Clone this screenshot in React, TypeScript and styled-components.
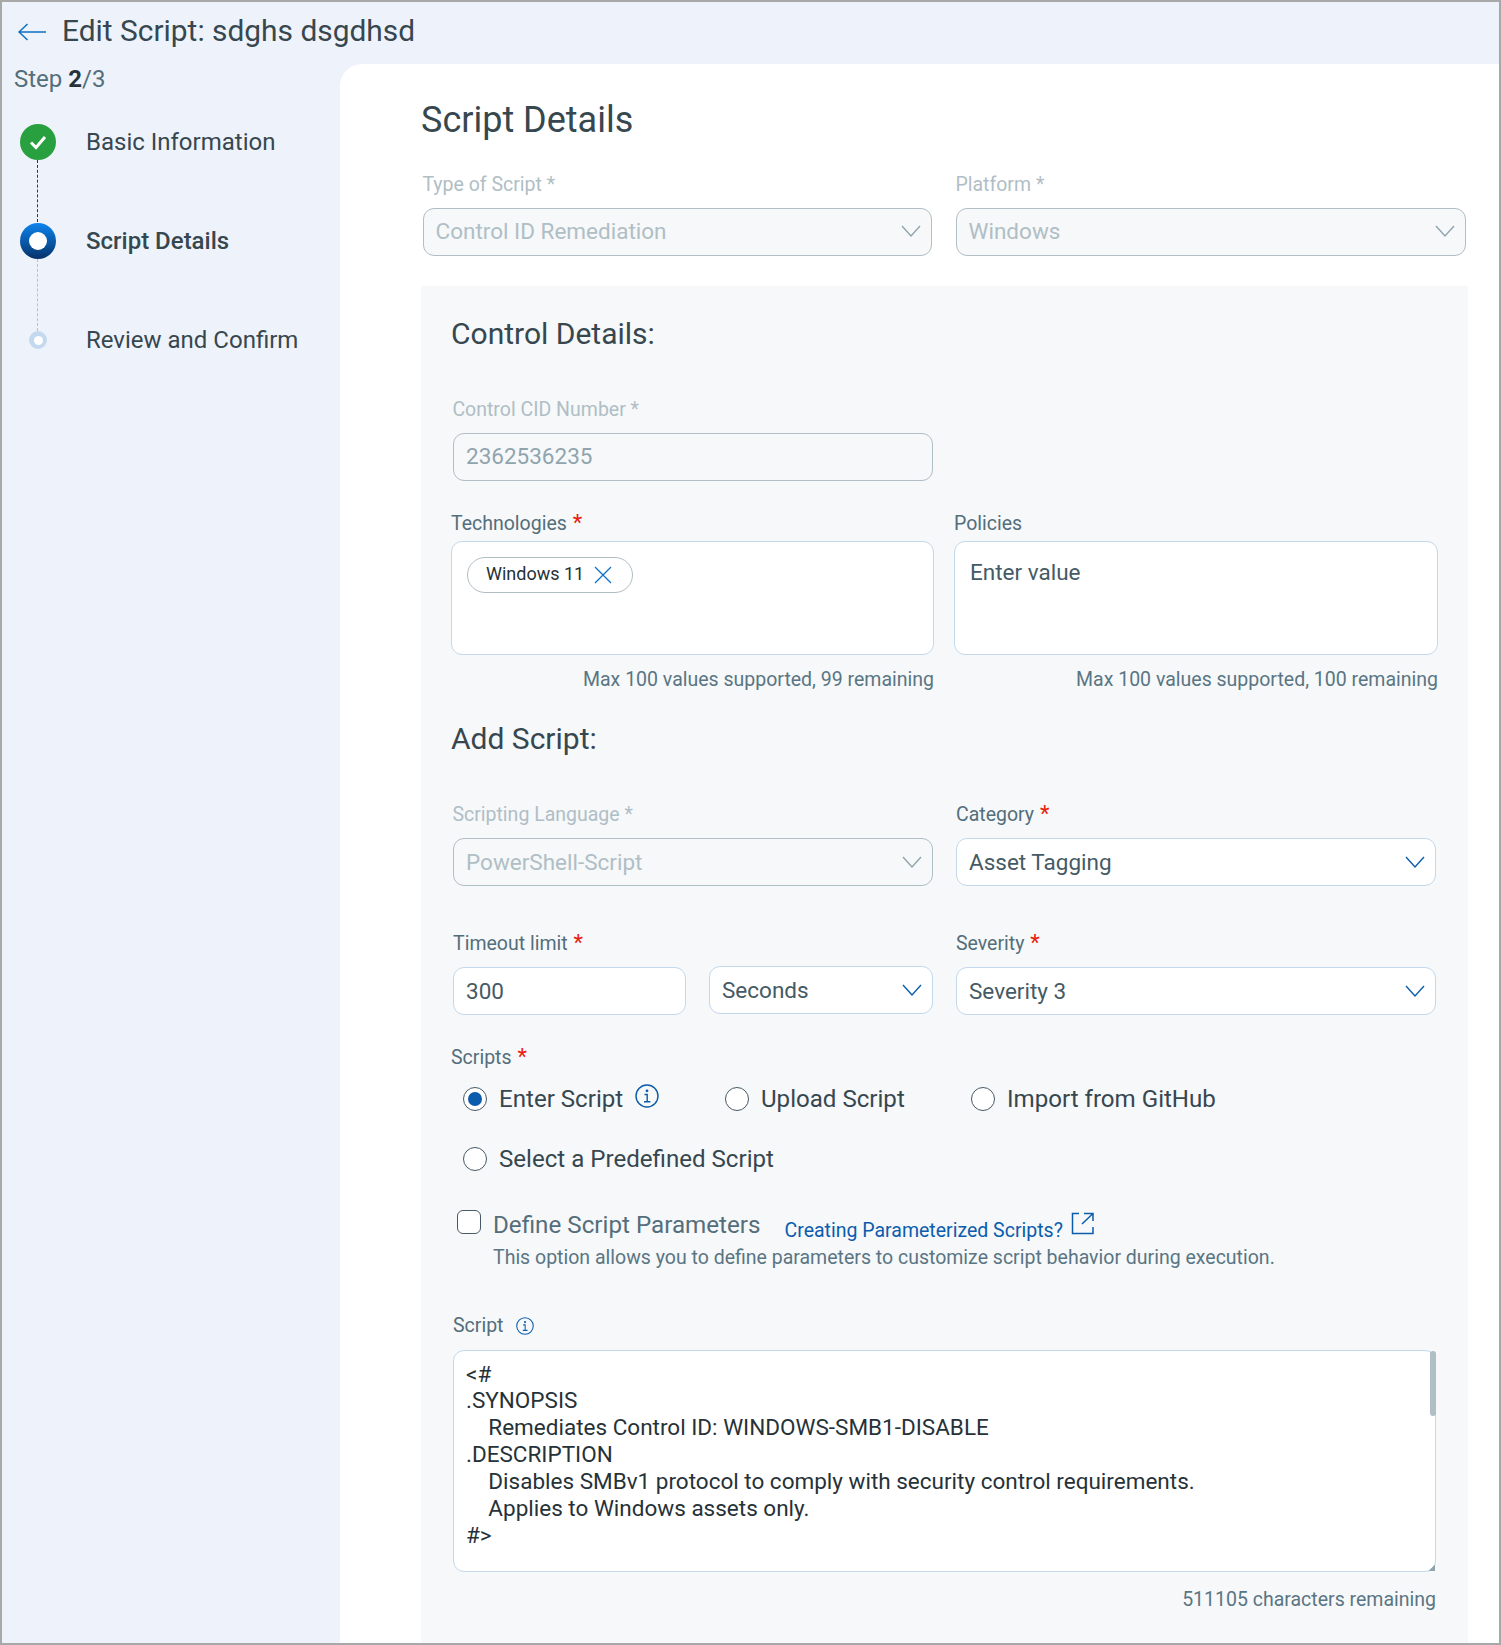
import React from 'react';
import styled, { createGlobalStyle } from 'styled-components';

const GlobalStyle = createGlobalStyle`
  html, body {
    margin: 0;
    padding: 0;
    background: #eef3fb;
    font-family: Roboto, "Liberation Sans", sans-serif;
  }
  * {
    box-sizing: border-box;
  }
`;

const Page = styled.div`
  width: 1501px;
  height: 1645px;
  border: 2px solid #a8a8a8;
  background: #eef3fb;
  overflow: hidden;
  display: flex;
  flex-direction: column;
`;

const TopBar = styled.header`
  height: 62px;
  flex: none;
  display: flex;
  align-items: center;
  padding: 0 0 4px 16px;
  gap: 15px;
`;

const BackIcon = styled.svg`
  width: 29px;
  height: 18px;
  flex: none;
  margin-top: 2px;
`;

const PageTitle = styled.h1`
  margin: 0;
  font-size: 29.9px;
  font-weight: 400;
  color: #37474f;
  line-height: 40px;
`;

const Body = styled.div`
  flex: 1;
  display: flex;
  min-height: 0;
`;

const Sidebar = styled.aside`
  width: 338px;
  flex: none;
  padding: 0 0 0 12px;
`;

const StepCount = styled.div`
  font-size: 24px;
  line-height: 28px;
  color: #546e7a;
  margin-top: 1px;
  b {
    font-weight: 700;
    color: #263238;
  }
`;

const StepList = styled.ol`
  list-style: none;
  margin: 31px 0 0;
  padding: 0;
`;

const StepItem = styled.li`
  position: relative;
  display: flex;
  align-items: center;
  height: 36px;
  & + & {
    margin-top: 63px;
  }
`;

const StepMarker = styled.div`
  width: 48px;
  height: 36px;
  flex: none;
  display: flex;
  align-items: center;
  justify-content: center;
`;

const DoneDot = styled.div`
  width: 36px;
  height: 36px;
  border-radius: 50%;
  background: #28a03f;
  display: flex;
  align-items: center;
  justify-content: center;
`;

const CurrentDot = styled.div`
  width: 36px;
  height: 36px;
  border-radius: 50%;
  background: linear-gradient(180deg, #0d84ee 0%, #053269 100%);
  display: flex;
  align-items: center;
  justify-content: center;
  &::after {
    content: '';
    width: 18px;
    height: 18px;
    border-radius: 50%;
    background: #fff;
  }
`;

const NextDot = styled.div`
  width: 18px;
  height: 18px;
  border-radius: 50%;
  background: #c4d9ef;
  display: flex;
  align-items: center;
  justify-content: center;
  &::after {
    content: '';
    width: 9px;
    height: 9px;
    border-radius: 50%;
    background: #fff;
  }
`;

const Connector = styled.div<{ $color: string; $height: number }>`
  position: absolute;
  left: 23px;
  top: 36px;
  height: ${(p) => p.$height}px;
  border-left: 1px dashed ${(p) => p.$color};
`;

const StepLabel = styled.span<{ $active?: boolean }>`
  margin-left: 24px;
  font-size: 24px;
  font-weight: ${(p) => (p.$active ? 500 : 400)};
  color: #37474f;
  white-space: nowrap;
`;

const Main = styled.main`
  flex: 1;
  background: #fff;
  border-top-left-radius: 22px;
  padding: 34px 31px 0 81px;
  min-width: 0;
`;

const SectionTitle = styled.h2`
  margin: 0;
  font-size: 36px;
  font-weight: 400;
  line-height: 44px;
  color: #37474f;
`;

const FormRow = styled.div<{ $inset?: boolean; $top: number }>`
  display: grid;
  grid-template-columns: ${(p) => (p.$inset ? '1fr 1fr' : '483px 484px')};
  column-gap: ${(p) => (p.$inset ? '23px' : '20px')};
  margin: ${(p) => p.$top}px ${(p) => (p.$inset ? '2px' : '0')} 0;
`;

const TopRow = styled.div`
  display: grid;
  grid-template-columns: 509px 510px;
  column-gap: 24px;
  margin: 30px 2px 0;
`;

const Field = styled.div``;

const Label = styled.label<{ $disabled?: boolean; $gap?: number }>`
  display: block;
  padding-top: 1px;
  font-size: 19.5px;
  line-height: 24px;
  margin-bottom: ${(p) => (p.$gap ?? 12) - 1}px;
  margin-left: ${(p) => (p.$disabled ? '-0.6px' : '0')};
  color: ${(p) => (p.$disabled ? '#b0bec5' : '#546e7a')};
  white-space: nowrap;
`;

const ScriptsLabel = styled(Label)`
  margin-top: 30px;
  margin-bottom: 0;
`;

const Required = styled.span`
  color: #e8200c;
  font-size: 22px;
  line-height: 0;
  margin-left: 1px;
`;

const Control = styled.div<{ $disabled?: boolean }>`
  height: 48px;
  border: 1px solid ${(p) => (p.$disabled ? '#b0bec5' : '#c3d8ec')};
  border-radius: 11px;
  background: ${(p) => (p.$disabled ? '#f6f8fa' : '#fff')};
  color: ${(p) => (p.$disabled ? '#b0bec5' : '#455a64')};
  font-size: 22.5px;
  display: flex;
  align-items: center;
  justify-content: space-between;
  padding: 0 8px 0 12px;
`;

const TopSelect = styled(Control)`
  padding: 0 8px 2px 11.5px;
`;

const DisabledInput = styled(Control)`
  color: #90a4ae;
  padding-bottom: 2px;
`;

const UnitSelect = styled(Control)`
  margin-top: -1px;
`;

const ChevronIcon = styled.svg`
  width: 24px;
  height: 14px;
  flex: none;
`;

const Panel = styled.section`
  margin-top: 30px;
  background: #f6f8fa;
  padding: 28px 30px 40px;
  height: 1400px;
`;

const PanelTitle = styled.h3<{ $top?: number }>`
  margin: ${(p) => p.$top ?? 0}px 0 0;
  font-size: 30px;
  font-weight: 400;
  line-height: 40px;
  color: #37474f;
`;

const CidField = styled.div`
  width: 480px;
  margin: 43px 0 0 2px;
`;

const TagBox = styled.div`
  height: 114px;
  background: #fff;
  border: 1px solid #c3d8ec;
  border-radius: 11px;
  padding: 15px;
`;

const Chip = styled.div`
  display: inline-flex;
  align-items: center;
  height: 36px;
  padding: 0 19px 3px 18px;
  border: 1px solid #b0bec5;
  border-radius: 18px;
  font-size: 18px;
  color: #263238;
  gap: 9px;
`;

const CloseIcon = styled.svg`
  width: 20px;
  height: 20px;
  margin-top: 3px;
`;

const Placeholder = styled.span`
  display: block;
  margin-top: 1px;
  font-size: 22.5px;
  line-height: 28px;
  color: #455a64;
`;

const Hint = styled.div`
  margin-top: 13px;
  text-align: right;
  font-size: 19.5px;
  line-height: 24px;
  color: #5a7583;
  white-space: nowrap;
`;

const TimeoutGroup = styled.div`
  display: grid;
  grid-template-columns: 233px 224px;
  column-gap: 23px;
`;

const RadioRow = styled.div<{ $top: number }>`
  display: flex;
  align-items: center;
  height: 36px;
  margin-top: ${(p) => p.$top}px;
  padding-left: 12px;
`;

const RadioOption = styled.div<{ $width?: number }>`
  display: flex;
  align-items: center;
  width: ${(p) => (p.$width ? `${p.$width}px` : 'auto')};
  flex: none;
  font-size: 24.1px;
  color: #37474f;
  white-space: nowrap;
`;

const Radio = styled.span<{ $checked?: boolean }>`
  width: 24px;
  height: 24px;
  flex: none;
  margin-right: 12px;
  border-radius: 50%;
  border: 1px solid #455a64;
  background: #fff;
  display: flex;
  align-items: center;
  justify-content: center;
  &::after {
    content: '';
    width: 14px;
    height: 14px;
    border-radius: 50%;
    background: ${(p) => (p.$checked ? '#0b5cad' : 'transparent')};
  }
`;

const InfoIcon = styled.svg<{ $size: number; $raise?: number }>`
  width: ${(p) => p.$size}px;
  height: ${(p) => p.$size}px;
  flex: none;
  margin-top: ${(p) => -(p.$raise ?? 0)}px;
`;

const InfoSpacer = styled.span`
  width: 12px;
`;

const ParamRow = styled.div`
  display: flex;
  align-items: flex-start;
  margin: 33px 0 0 6px;
`;

const Checkbox = styled.span`
  width: 24px;
  height: 24px;
  flex: none;
  border: 1px solid #455a64;
  border-radius: 6px;
  background: #fff;
  margin-right: 12px;
`;

const ParamBody = styled.div``;

const ParamHead = styled.div`
  display: flex;
  align-items: center;
  height: 30px;
`;

const ParamName = styled.span`
  font-size: 24.2px;
  color: #546e7a;
  white-space: nowrap;
`;

const DocLink = styled.a`
  margin: 10px 0 0 24px;
  font-size: 19.5px;
  color: #0b5cad;
  white-space: nowrap;
`;

const ExternalIcon = styled.svg`
  width: 23px;
  height: 23px;
  margin: -4px 0 0 8px;
  flex: none;
`;

const ParamNote = styled.div`
  margin-top: 6px;
  font-size: 19.5px;
  line-height: 24px;
  color: #5a7583;
  white-space: nowrap;
`;

const ScriptLabel = styled.div`
  display: flex;
  align-items: center;
  gap: 13px;
  margin: 44px 0 12px 2px;
  font-size: 19.5px;
  line-height: 24px;
  color: #546e7a;
`;

const ScriptBox = styled.div`
  position: relative;
  margin: 0 2px;
  height: 222px;
`;

const ScriptArea = styled.textarea`
  display: block;
  width: 100%;
  height: 100%;
  border: 1px solid #c3d8ec;
  border-radius: 11px;
  background: #fff;
  padding: 9.5px 12px;
  margin: 0;
  font-family: Roboto, "Liberation Sans", sans-serif;
  font-size: 22.5px;
  line-height: 26.9px;
  color: #263238;
  overflow-y: scroll;
  outline: none;
  &::-webkit-scrollbar {
    width: 6px;
    height: 6px;
    background: transparent;
  }
  &::-webkit-resizer {
    background: linear-gradient(135deg, transparent 78%, #90a4ae 78%);
  }
`;

const ScrollThumb = styled.div`
  position: absolute;
  top: 1px;
  right: 0;
  width: 6px;
  height: 65px;
  background: #b0bec5;
  border-radius: 3px;
`;

const CharCount = styled.div`
  margin: 16px 2px 0 0;
  text-align: right;
  font-size: 19.5px;
  line-height: 24px;
  color: #5a7583;
`;

const Chevron: React.FC<{ color: string }> = ({ color }) => (
  <ChevronIcon viewBox="0 0 24 14" fill="none">
    <path d="M3 2l9 10 9-10" stroke={color} strokeWidth="1.4" />
  </ChevronIcon>
);

const Info: React.FC<{ size: number; raise?: number }> = ({ size, raise }) => (
  <InfoIcon $size={size} $raise={raise} viewBox="0 0 24 24" fill="none">
    <circle cx="12" cy="12" r="11" stroke="#0b5cad" strokeWidth="1.4" />
    <circle cx="12" cy="6.8" r="1.4" fill="#0b5cad" />
    <path d="M9.5 10.5h2.7v7.2M9 17.8h6.4" stroke="#0b5cad" strokeWidth="1.4" />
  </InfoIcon>
);

const scriptText = `<#
.SYNOPSIS
    Remediates Control ID: WINDOWS-SMB1-DISABLE
.DESCRIPTION
    Disables SMBv1 protocol to comply with security control requirements.
    Applies to Windows assets only.
#>`;

const App: React.FC = () => {
  return (
    <Page>
      <GlobalStyle />
      <TopBar>
        <BackIcon viewBox="0 0 29 18" fill="none">
          <path d="M1 9h27M9.5 1L1 9l8.5 8" stroke="#0b6fc7" strokeWidth="1.5" />
        </BackIcon>
        <PageTitle>Edit Script: sdghs dsgdhsd</PageTitle>
      </TopBar>
      <Body>
        <Sidebar>
          <StepCount>
            Step <b>2</b>/3
          </StepCount>
          <StepList>
            <StepItem>
              <StepMarker>
                <DoneDot>
                  <svg width="20" height="16" viewBox="0 0 20 16" fill="none">
                    <path d="M3 8.5l5 5L17 3" stroke="#fff" strokeWidth="3" />
                  </svg>
                </DoneDot>
              </StepMarker>
              <StepLabel>Basic Information</StepLabel>
              <Connector $color="#0b3f7c" $height={62} />
            </StepItem>
            <StepItem>
              <StepMarker>
                <CurrentDot />
              </StepMarker>
              <StepLabel $active>Script Details</StepLabel>
              <Connector $color="#a9c4dc" $height={72} />
            </StepItem>
            <StepItem>
              <StepMarker>
                <NextDot />
              </StepMarker>
              <StepLabel>Review and Confirm</StepLabel>
            </StepItem>
          </StepList>
        </Sidebar>
        <Main>
          <SectionTitle>Script Details</SectionTitle>
          <TopRow>
            <Field>
              <Label $disabled>Type of Script *</Label>
              <TopSelect $disabled>
                Control ID Remediation
                <Chevron color="#90a4ae" />
              </TopSelect>
            </Field>
            <Field>
              <Label $disabled>Platform *</Label>
              <TopSelect $disabled>
                Windows
                <Chevron color="#90a4ae" />
              </TopSelect>
            </Field>
          </TopRow>
          <Panel>
            <PanelTitle>Control Details:</PanelTitle>
            <CidField>
              <Label $disabled>Control CID Number *</Label>
              <DisabledInput $disabled>2362536235</DisabledInput>
            </CidField>
            <FormRow $top={30}>
              <Field>
                <Label $gap={6}>
                  Technologies <Required>*</Required>
                </Label>
                <TagBox>
                  <Chip>
                    Windows 11
                    <CloseIcon viewBox="0 0 20 20" fill="none">
                      <path d="M2 2l16 16M18 2L2 18" stroke="#0b6fc7" strokeWidth="1.2" />
                    </CloseIcon>
                  </Chip>
                </TagBox>
                <Hint>Max 100 values supported, 99 remaining</Hint>
              </Field>
              <Field>
                <Label $gap={6}>Policies</Label>
                <TagBox>
                  <Placeholder>Enter value</Placeholder>
                </TagBox>
                <Hint>Max 100 values supported, 100 remaining</Hint>
              </Field>
            </FormRow>
            <PanelTitle $top={27}>Add Script:</PanelTitle>
            <FormRow $inset $top={43}>
              <Field>
                <Label $disabled>Scripting Language *</Label>
                <Control $disabled>
                  PowerShell-Script
                  <Chevron color="#90a4ae" />
                </Control>
              </Field>
              <Field>
                <Label>
                  Category <Required>*</Required>
                </Label>
                <Control>
                  Asset Tagging
                  <Chevron color="#0b5cad" />
                </Control>
              </Field>
            </FormRow>
            <FormRow $inset $top={45}>
              <Field>
                <Label>
                  Timeout limit <Required>*</Required>
                </Label>
                <TimeoutGroup>
                  <Control>300</Control>
                  <UnitSelect>
                    Seconds
                    <Chevron color="#0b5cad" />
                  </UnitSelect>
                </TimeoutGroup>
              </Field>
              <Field>
                <Label>
                  Severity <Required>*</Required>
                </Label>
                <Control>
                  Severity 3
                  <Chevron color="#0b5cad" />
                </Control>
              </Field>
            </FormRow>
            <ScriptsLabel>
              Scripts <Required>*</Required>
            </ScriptsLabel>
            <RadioRow $top={11}>
              <RadioOption $width={262}>
                <Radio $checked />
                Enter Script
                <InfoSpacer />
                <Info size={24} raise={6} />
              </RadioOption>
              <RadioOption $width={246}>
                <Radio />
                Upload Script
              </RadioOption>
              <RadioOption>
                <Radio />
                Import from GitHub
              </RadioOption>
            </RadioRow>
            <RadioRow $top={24}>
              <RadioOption>
                <Radio />
                Select a Predefined Script
              </RadioOption>
            </RadioRow>
            <ParamRow>
              <Checkbox />
              <ParamBody>
                <ParamHead>
                  <ParamName>Define Script Parameters</ParamName>
                  <DocLink>Creating Parameterized Scripts?</DocLink>
                  <ExternalIcon viewBox="0 0 23 23" fill="none">
                    <path d="M8 1.500H1.500v20h20.500V15M11 12L22 1.500M13 1.500h9V9" stroke="#0b5cad" strokeWidth="1.500" />
                  </ExternalIcon>
                </ParamHead>
                <ParamNote>This option allows you to define parameters to customize script behavior during execution.</ParamNote>
              </ParamBody>
            </ParamRow>
            <ScriptLabel>
              Script
              <Info size={18} />
            </ScriptLabel>
            <ScriptBox>
              <ScriptArea readOnly value={scriptText} />
              <ScrollThumb />
            </ScriptBox>
            <CharCount>511105 characters remaining</CharCount>
          </Panel>
        </Main>
      </Body>
    </Page>
  );
};

export default App;
